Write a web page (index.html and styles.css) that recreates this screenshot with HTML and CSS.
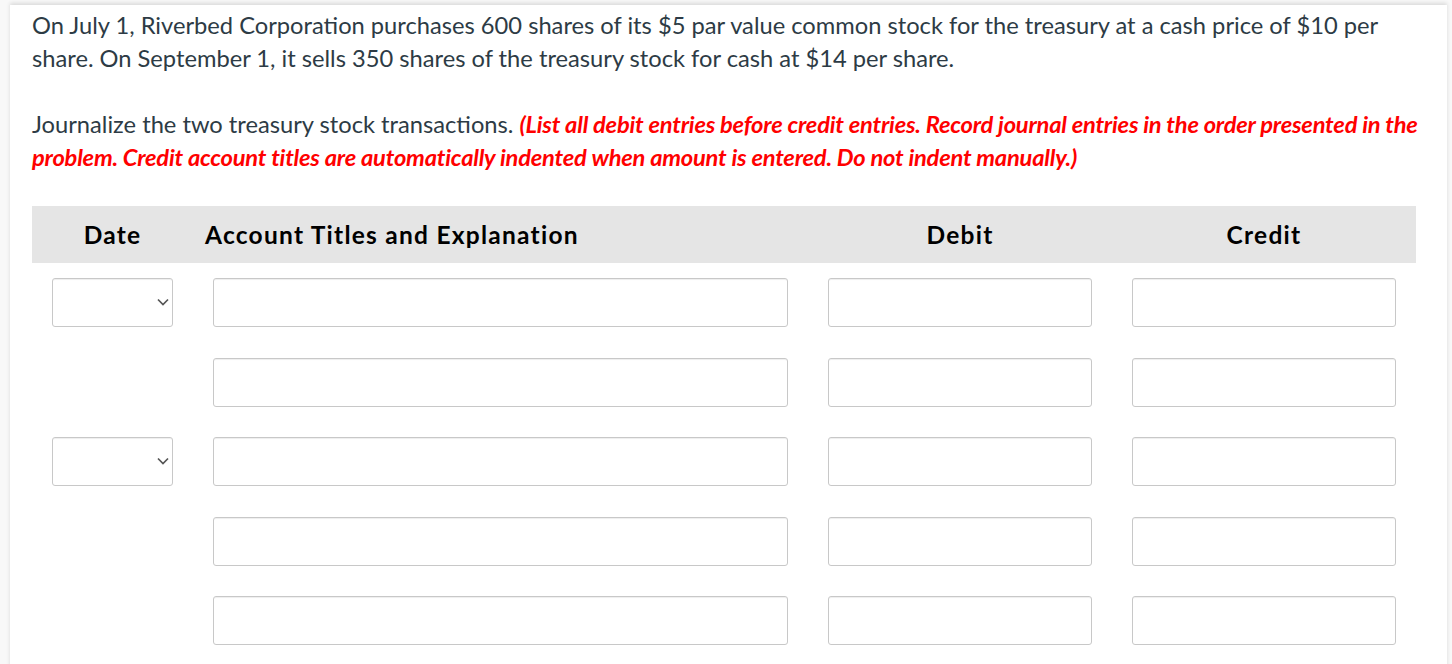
FILE: index.html
```html
<!DOCTYPE html>
<html>
<head>
<meta charset="utf-8">
<link rel="stylesheet" href="styles.css">
</head>
<body>
<div class="page">
  <p class="question">On July 1, Riverbed Corporation purchases 600 shares of its $5 par value common stock for the treasury at a cash price of $10 per share. On September 1, it sells 350 shares of the treasury stock for cash at $14 per share.</p>
  <p class="instructions">Journalize the two treasury stock transactions. <span class="note">(List all debit entries before credit entries. Record journal entries in the order presented in the problem. Credit account titles are automatically indented when amount is entered. Do not indent manually.)</span></p>
  <div class="journal">
    <div class="head">
      <div class="h-date">Date</div>
      <div class="h-acct">Account Titles and Explanation</div>
      <div class="h-num">Debit</div>
      <div class="h-num">Credit</div>
    </div>
    <div class="row">
      <div class="c-date"><div class="select"><svg class="chev" width="12" height="8" viewBox="0 0 12 8"><path d="M1 1.5 L6 6.5 L11 1.5" fill="none" stroke="#555" stroke-width="1.7"/></svg></div></div>
      <div class="c-acct"><div class="field"></div></div>
      <div class="c-num"><div class="field"></div></div>
      <div class="c-num"><div class="field"></div></div>
    </div>
    <div class="row">
      <div class="c-date"></div>
      <div class="c-acct"><div class="field"></div></div>
      <div class="c-num"><div class="field"></div></div>
      <div class="c-num"><div class="field"></div></div>
    </div>
    <div class="row">
      <div class="c-date"><div class="select"><svg class="chev" width="12" height="8" viewBox="0 0 12 8"><path d="M1 1.5 L6 6.5 L11 1.5" fill="none" stroke="#555" stroke-width="1.7"/></svg></div></div>
      <div class="c-acct"><div class="field"></div></div>
      <div class="c-num"><div class="field"></div></div>
      <div class="c-num"><div class="field"></div></div>
    </div>
    <div class="row">
      <div class="c-date"></div>
      <div class="c-acct"><div class="field"></div></div>
      <div class="c-num"><div class="field"></div></div>
      <div class="c-num"><div class="field"></div></div>
    </div>
    <div class="row">
      <div class="c-date"></div>
      <div class="c-acct"><div class="field"></div></div>
      <div class="c-num"><div class="field"></div></div>
      <div class="c-num"><div class="field"></div></div>
    </div>
  </div>
</div>
</body>
</html>
```
FILE: styles.css
```css
html, body {
  margin: 0;
  padding: 0;
  background: #f8f8f8;
  height: 100%;
  overflow: hidden;
}
.page {
  margin-left: 10px;
  margin-right: 5px;
  margin-top: 5px;
  background: #fff;
  box-shadow: 0 -2px 4px rgba(0,0,0,0.12);
  padding: 4px 0 0 22px;
  min-height: 100%;
  font-family: Lato, "Open Sans", sans-serif;
  color: #2d3b45;
}
.question, .instructions {
  margin: 0;
  font-size: 23.7px;
  line-height: 33px;
  width: 1400px;
}
.question { margin-bottom: 33px; }
.instructions { margin-bottom: 32px; }
.note {
  color: #ff0000;
  font-weight: bold;
  font-style: italic;
  letter-spacing: -0.22px;
}
.journal {
  width: 1384px;
}
.head {
  display: grid;
  grid-template-columns: 161px 615px 304px 304px;
  background: #e5e5e5;
  height: 57px;
  align-items: center;
  font-weight: bold;
  font-size: 24.5px;
  letter-spacing: 1.25px;
  color: #000;
}
.h-date { text-align: center; }
.h-acct { padding-left: 12px; }
.h-num { text-align: center; }
.row {
  display: grid;
  grid-template-columns: 161px 615px 304px 304px;
  height: 79.5px;
  align-items: start;
  padding-top: 15px;
  box-sizing: border-box;
}
.c-date, .c-acct, .c-num { padding: 0 20px; }
.field, .select {
  height: 49px;
  box-sizing: border-box;
  border: 1px solid #c8c8c8;
  border-radius: 3px;
  background: #fff;
  box-shadow: inset 0 2px 1px -1px #eee;
}
.select {
  position: relative;
}
.chev {
  position: absolute;
  right: 3px;
  top: 19px;
}
```
